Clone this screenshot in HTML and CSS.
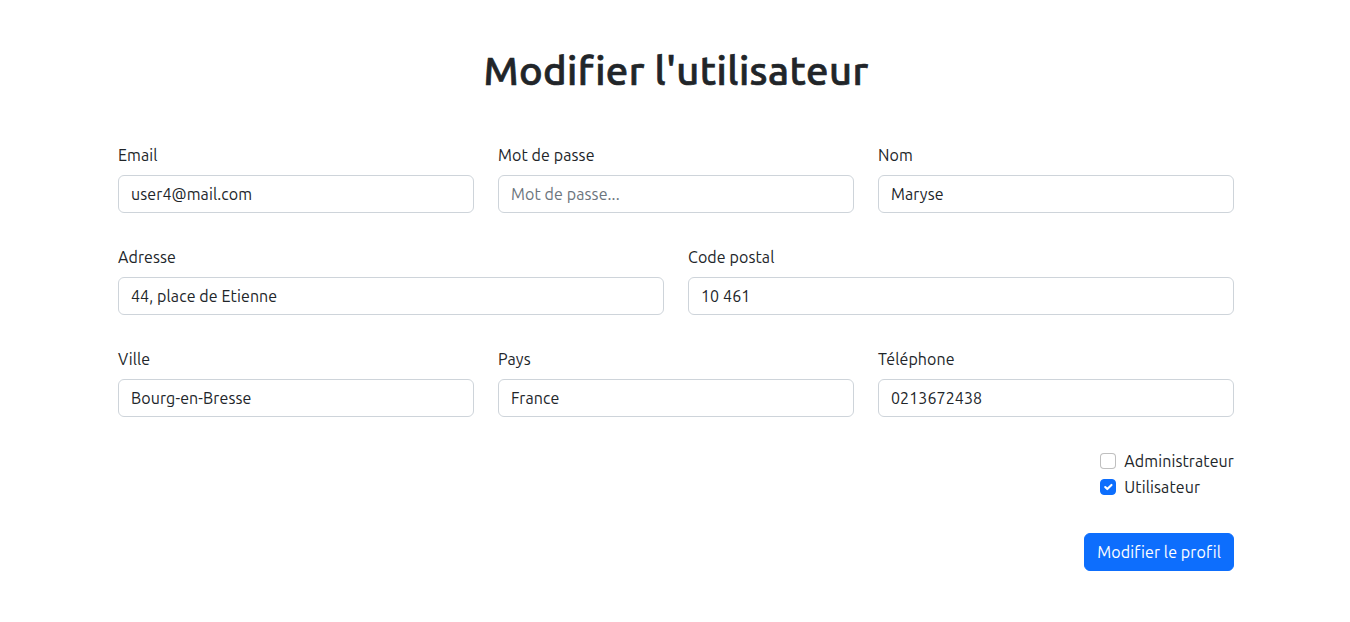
FILE: index.html
```html
<!DOCTYPE html>
<html lang="fr">
<head>
<meta charset="utf-8">
<title>Modifier l'utilisateur</title>
<link rel="stylesheet" href="styles.css">
</head>
<body>
<div class="container">
  <h1 class="title">Modifier l'utilisateur</h1>
  <form class="form">
    <div class="row row-3">
      <div class="field">
        <label class="form-label" for="email">Email</label>
        <input class="form-control" id="email" type="text" value="user4@mail.com">
      </div>
      <div class="field">
        <label class="form-label" for="pwd">Mot de passe</label>
        <input class="form-control" id="pwd" type="password" placeholder="Mot de passe...">
      </div>
      <div class="field">
        <label class="form-label" for="nom">Nom</label>
        <input class="form-control" id="nom" type="text" value="Maryse">
      </div>
    </div>
    <div class="row row-2">
      <div class="field">
        <label class="form-label" for="adr">Adresse</label>
        <input class="form-control" id="adr" type="text" value="44, place de Etienne">
      </div>
      <div class="field">
        <label class="form-label" for="cp">Code postal</label>
        <input class="form-control" id="cp" type="text" value="10 461">
      </div>
    </div>
    <div class="row row-3">
      <div class="field">
        <label class="form-label" for="ville">Ville</label>
        <input class="form-control" id="ville" type="text" value="Bourg-en-Bresse">
      </div>
      <div class="field">
        <label class="form-label" for="pays">Pays</label>
        <input class="form-control" id="pays" type="text" value="France">
      </div>
      <div class="field">
        <label class="form-label" for="tel">Téléphone</label>
        <input class="form-control" id="tel" type="text" value="0213672438">
      </div>
    </div>
    <div class="checks-row">
      <div class="checks">
        <label class="form-check">
          <span class="check-box"></span>
          <span class="check-label">Administrateur</span>
        </label>
        <label class="form-check">
          <span class="check-box checked">
            <svg viewBox="0 0 20 20" width="16" height="16"><path d="m6 10 3 3 6-6" fill="none" stroke="#fff" stroke-width="3" stroke-linecap="round" stroke-linejoin="round"/></svg>
          </span>
          <span class="check-label">Utilisateur</span>
        </label>
      </div>
    </div>
    <div class="actions">
      <button class="btn-primary" type="button">Modifier le profil</button>
    </div>
  </form>
</div>
</body>
</html>
```

FILE: styles.css
```css
* { box-sizing: border-box; }

body {
  margin: 0;
  font-family: "Ubuntu", "Roboto", "Liberation Sans", sans-serif;
  font-size: 16px;
  font-weight: 400;
  letter-spacing: 0.1px;
  line-height: 1.5;
  color: #212529;
  background: #fff;
}

.container {
  max-width: 1140px;
  margin: 0 auto;
  padding: 0 11px 0 13px;
}

.title {
  margin: 47px 0 48px;
  font-size: 40px;
  font-weight: 500;
  letter-spacing: 0.4px;
  -webkit-text-stroke: 0.7px #212529;
  line-height: 1.2;
  text-align: center;
}

.row {
  display: grid;
  column-gap: 24px;
  margin-bottom: 32px;
}

.row-3 { grid-template-columns: repeat(3, 1fr); }
.row-2 { grid-template-columns: repeat(2, 1fr); }

.field {
  display: flex;
  flex-direction: column;
}

.form-label {
  margin-bottom: 8px;
  line-height: 24px;
}

.form-control {
  display: block;
  width: 100%;
  height: 38px;
  padding: 6px 12px;
  font: inherit;
  font-size: 16px;
  letter-spacing: inherit;
  line-height: 24px;
  color: #212529;
  background: #fff;
  border: 1px solid #ced4da;
  border-radius: 6px;
  outline: none;
}

.form-control::placeholder {
  color: #6c757d;
}

.checks-row {
  display: flex;
  justify-content: flex-end;
  margin-bottom: 32px;
}

.form-check {
  display: flex;
  align-items: center;
  min-height: 24px;
  margin-bottom: 2px;
  cursor: pointer;
}

.check-box {
  flex: none;
  width: 16px;
  height: 16px;
  margin-right: 8px;
  border: 1px solid rgba(0, 0, 0, 0.25);
  border-radius: 4px;
  background: #fff;
  display: flex;
  align-items: center;
  justify-content: center;
}

.check-box.checked {
  background: #0d6efd;
  border-color: #0d6efd;
}

.check-box svg {
  display: block;
}

.check-label {
  line-height: 24px;
}

.actions {
  display: flex;
  justify-content: flex-end;
}

.btn-primary {
  font: inherit;
  font-size: 16px;
  letter-spacing: inherit;
  line-height: 24px;
  padding: 6px 12px;
  color: #fff;
  background: #0d6efd;
  border: 1px solid #0d6efd;
  border-radius: 6px;
  cursor: pointer;
}
```
